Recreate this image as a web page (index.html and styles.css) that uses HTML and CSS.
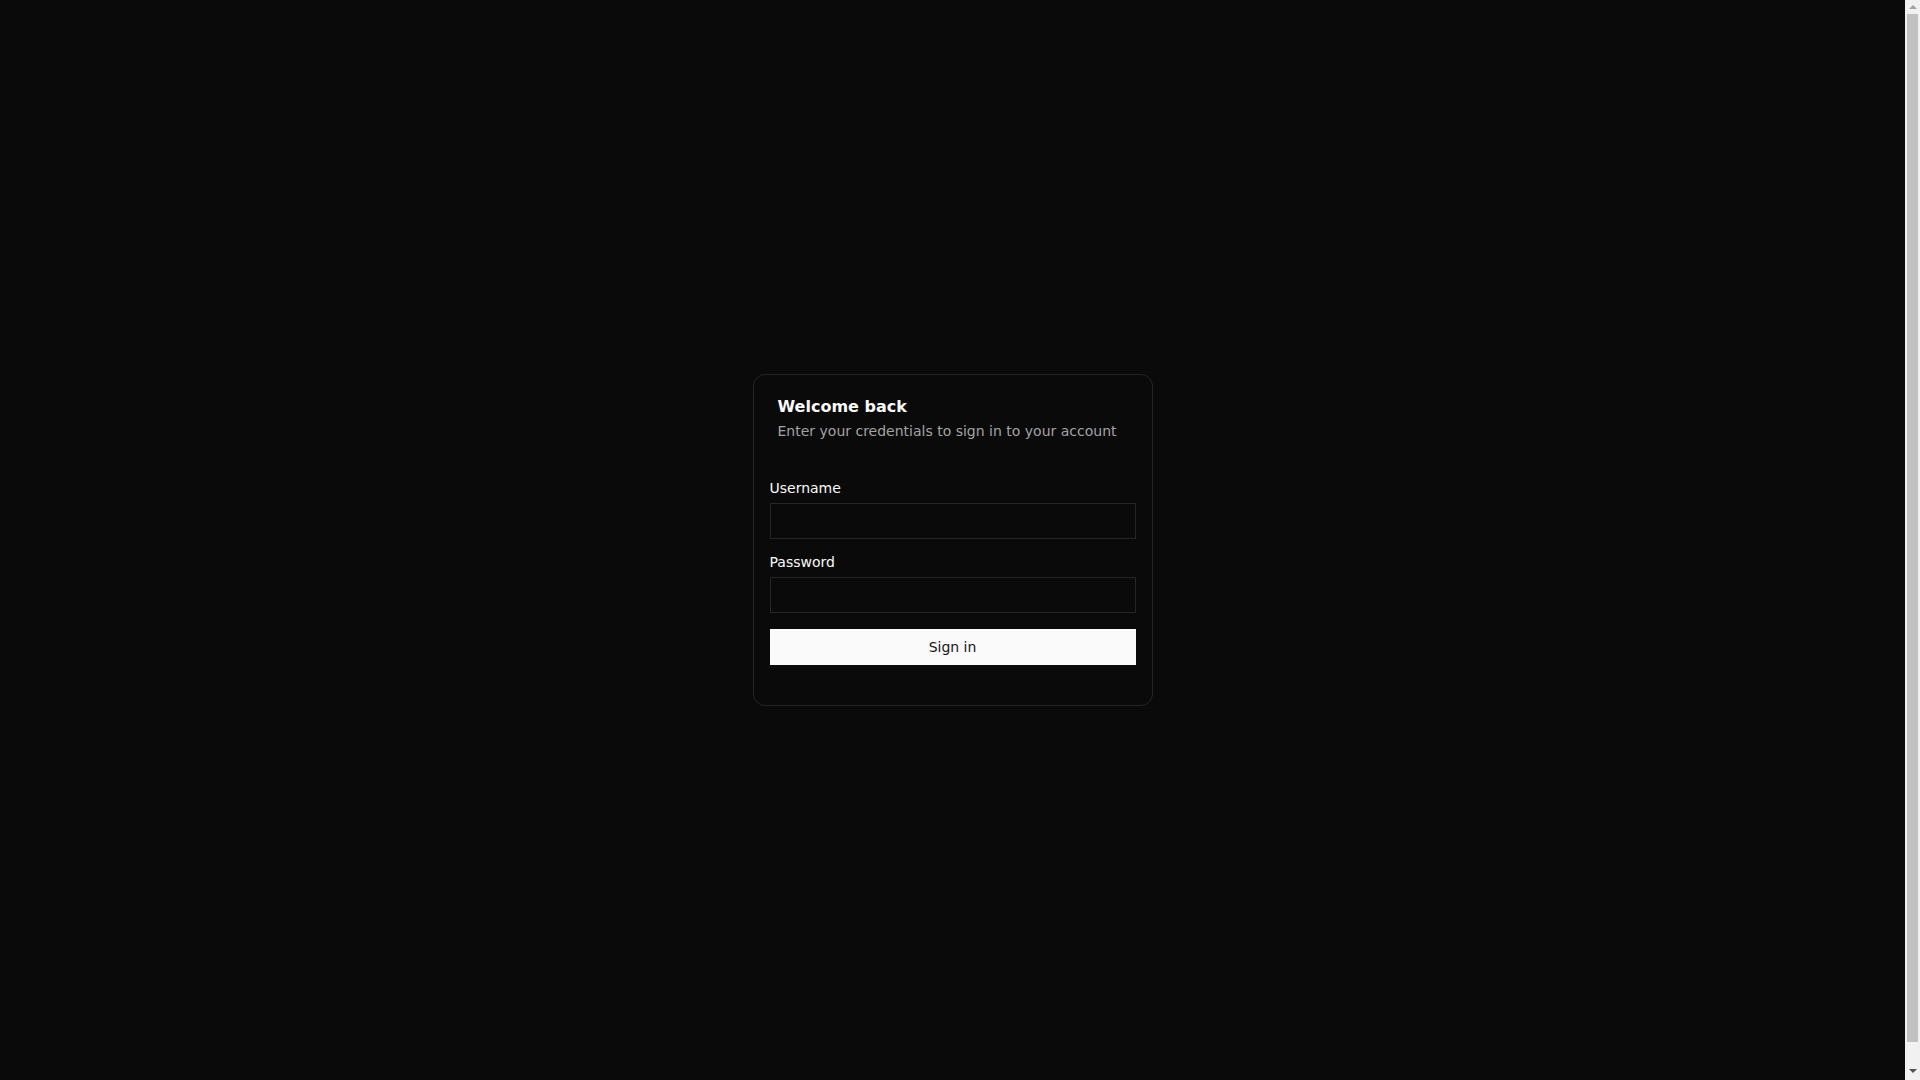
FILE: index.html
```html
<!DOCTYPE html>
<html lang="en">
<head>
<meta charset="utf-8">
<title>Sign in</title>
<link rel="stylesheet" href="styles.css">
</head>
<body>
<main class="page">
  <div class="card">
    <div class="card-header">
      <h3 class="card-title">Welcome back</h3>
      <p class="card-desc">Enter your credentials to sign in to your account</p>
    </div>
    <form class="card-content" onsubmit="return false;">
      <div class="field">
        <label class="label" for="username">Username</label>
        <input class="input" id="username" type="text">
      </div>
      <div class="field">
        <label class="label" for="password">Password</label>
        <input class="input" id="password" type="password">
      </div>
      <button class="button" type="submit">Sign in</button>
    </form>
    <div class="card-footer"></div>
  </div>
</main>
<div class="scrollbar" aria-hidden="true">
  <span class="sb-arrow sb-up"></span>
  <span class="sb-thumb"></span>
  <span class="sb-arrow sb-down"></span>
</div>
</body>
</html>
```

FILE: styles.css
```css
* {
  box-sizing: border-box;
}

html {
  background: #0a0a0a;
}

body {
  margin: 0;
  background: #0a0a0a;
  color: #fafafa;
  font-family: "DejaVu Sans", "Liberation Sans", sans-serif;
  overflow: hidden;
}

.page {
  min-height: 100vh;
  padding-right: 15px;
  display: flex;
  align-items: center;
  justify-content: center;
}

.card {
  width: 400px;
  background: #0a0a0a;
  border: 1px solid #262626;
  border-radius: 12px;
  display: flex;
  flex-direction: column;
}

.card-header {
  padding: 24px;
  display: flex;
  flex-direction: column;
  gap: 6px;
}

.card-title {
  margin: 0;
  font-size: 16px;
  line-height: 16px;
  font-weight: 700;
  color: #fafafa;
}

.card-desc {
  margin: 0;
  font-size: 14px;
  line-height: 20px;
  color: #a3a3a3;
}

.card-content {
  padding: 16px;
  display: flex;
  flex-direction: column;
  gap: 16px;
  margin: 0;
}

.field {
  display: flex;
  flex-direction: column;
  gap: 8px;
}

.label {
  font-size: 14px;
  line-height: 14px;
  font-weight: 500;
  color: #fafafa;
}

.input {
  display: block;
  width: 100%;
  height: 36px;
  padding: 4px 12px;
  background: transparent;
  border: 1px solid #262626;
  border-radius: 0;
  color: #fafafa;
  font-family: inherit;
  font-size: 14px;
  outline: none;
}

.button {
  display: flex;
  align-items: center;
  justify-content: center;
  width: 100%;
  height: 36px;
  padding: 8px 16px;
  background: #fafafa;
  color: #171717;
  border: none;
  border-radius: 0;
  font-family: inherit;
  font-size: 14px;
  line-height: 20px;
  font-weight: 500;
  cursor: pointer;
}

.card-footer {
  height: 24px;
}

/* browser-style vertical scrollbar drawn over the right edge */
.scrollbar {
  position: fixed;
  top: 0;
  right: 0;
  width: 15px;
  height: 100vh;
  background: #f1f1f1;
  display: flex;
  flex-direction: column;
  align-items: center;
}

.sb-arrow {
  width: 15px;
  display: flex;
  justify-content: center;
}

.sb-arrow::before {
  content: "";
  width: 0;
  height: 0;
  border-left: 4px solid transparent;
  border-right: 4px solid transparent;
}

.sb-up {
  flex: 0 0 14px;
  padding-top: 5px;
}

.sb-up::before {
  border-bottom: 4px solid #a3a3a3;
}

.sb-thumb {
  width: 11px;
  flex: 1 1 auto;
  background: #c1c1c1;
}

.sb-down {
  flex: 0 0 38px;
  padding-top: 27px;
}

.sb-down::before {
  border-top: 4px solid #505050;
}
```
